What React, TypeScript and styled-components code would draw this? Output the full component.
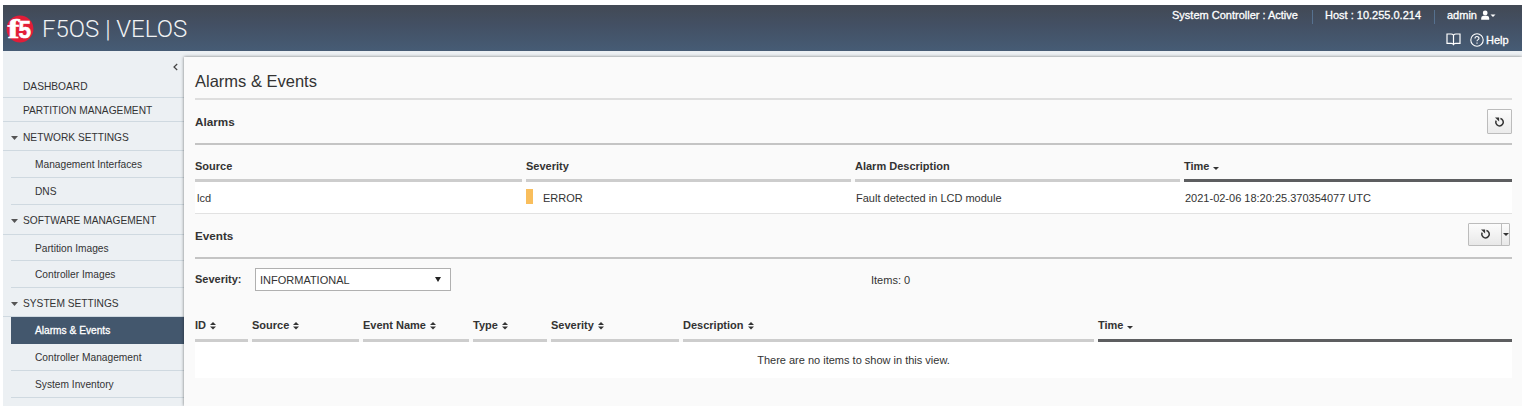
import React from "react";
import styled, { createGlobalStyle, css } from "styled-components";

const GlobalStyle = createGlobalStyle`
  * { box-sizing: border-box; }
  body {
    margin: 0;
    background: #fff;
    color: #333;
    font: 11px/14px "Liberation Sans", Arial, sans-serif;
  }
`;

const Page = styled.div`
  height: 406px;
  padding: 5px 0 0 3px;
  display: flex;
  flex-direction: column;
  overflow: hidden;
`;

const Header = styled.header`
  height: 46px;
  flex: none;
  display: flex;
  justify-content: space-between;
  background: linear-gradient(#424954, #435064 45%, #465c75);
  color: #fff;
`;

const Brand = styled.div`
  display: flex;
  align-items: center;
  padding: 2px 0 0 3px;
  gap: 8px;
`;

const BrandName = styled.span`
  font: 300 24px/28px Roboto, sans-serif;
  color: #f0f2f4;
  white-space: nowrap;
`;

const HeaderInfo = styled.div`
  display: flex;
  flex-direction: column;
  width: 350px;
  -webkit-text-stroke: 0.3px #fff;
`;

const StatusLine = styled.div`
  display: flex;
  height: 20px;
  padding-top: 5px;
`;

const StatusItem = styled.div<{ $width: number; $indent?: number }>`
  width: ${(p) => p.$width}px;
  height: 14px;
  padding-left: ${(p) => p.$indent ?? 0}px;
  line-height: 11px;
  white-space: nowrap;
  border-right: 1px solid #56718f;
`;

const UserMenu = styled.div`
  display: flex;
  align-items: flex-start;
  padding-left: 12px;
  line-height: 11px;
  gap: 4px;
`;

const HelpLine = styled.div`
  display: flex;
  align-items: center;
  padding: 6px 0 0 274px;
  height: 23px;
`;

const HelpLabel = styled.span`
  padding: 1px 0 0 2px;
`;

const BookIcon = styled.svg`
  margin-right: 9px;
`;

const Body = styled.div`
  flex: 1;
  min-height: 0;
  display: flex;
  background: #ecf0f3;
`;

const Sidebar = styled.nav`
  width: 181px;
  flex: none;
  font-size: 10.2px;
`;

const Collapse = styled.div`
  height: 24px;
  display: flex;
  justify-content: flex-end;
  padding: 12px 6px 0 0;
`;

const NavItem = styled.div<{ $height: number; $drop?: number }>`
  height: ${(p) => p.$height}px;
  border-bottom: 1px solid #cfd9e0;
  display: flex;
  align-items: center;
  padding: ${(p) => p.$drop ?? 2}px 0 0 8px;
  white-space: nowrap;
`;

const Caret = styled.span`
  width: 12px;
  display: flex;
`;

const SubItem = styled.div<{ $height: number; $active?: boolean }>`
  height: ${(p) => p.$height}px;
  margin-left: 8px;
  padding: 2px 0 0 24px;
  border-bottom: 1px solid #cfd9e0;
  display: flex;
  align-items: center;
  white-space: nowrap;
  ${(p) =>
    p.$active &&
    css`
      background: #43576d;
      border-bottom-color: #43576d;
      color: #fff;
      -webkit-text-stroke: 0.3px #fff;
    `}
`;

const Panel = styled.main`
  flex: 1;
  min-width: 0;
  margin-top: 6px;
  padding: 0 10px 0 11px;
  background: #fafafa;
  box-shadow: 0 0 3px rgba(0, 0, 0, 0.5);
`;

const Title = styled.h1`
  height: 43px;
  margin: 0;
  padding-top: 14px;
  border-bottom: 2px solid #dedede;
  font-size: 16.5px;
  line-height: 20px;
  font-weight: 400;
`;

const SectionBar = styled.div<{ $height: number }>`
  height: ${(p) => p.$height}px;
  display: flex;
  justify-content: space-between;
  align-items: center;
  border-bottom: 2px solid #c4c4c4;
`;

const SectionTitle = styled.h2`
  margin: 0;
  font-size: 11.7px;
  line-height: 14px;
`;

const RefreshButton = styled.button`
  width: 25px;
  height: 25px;
  padding: 0;
  display: flex;
  align-items: center;
  justify-content: center;
  border: 1px solid #bcbcbc;
  border-radius: 1px;
  background: linear-gradient(#fcfcfc, #ebebeb);
`;

const SplitButton = styled.div`
  width: 42px;
  height: 23px;
  margin: 0 2px 3px 0;
  display: flex;
  border: 1px solid #bcbcbc;
  border-radius: 1px;
  background: linear-gradient(#fcfcfc, #e8e8e8);
`;

const SplitPart = styled.button<{ $width: number; $divided?: boolean }>`
  width: ${(p) => p.$width}px;
  padding: 0;
  border: 0;
  border-left: ${(p) => (p.$divided ? "1px solid #bcbcbc" : "0")};
  background: none;
  display: flex;
  align-items: center;
  justify-content: center;
`;

const HeadRow = styled.div<{ $columns: string; $top: number }>`
  display: grid;
  grid-template-columns: ${(p) => p.$columns};
  column-gap: 4px;
  padding-top: ${(p) => p.$top}px;
`;

const HeadCell = styled.div<{ $sorted?: boolean; $height: number }>`
  height: ${(p) => p.$height}px;
  display: flex;
  align-items: flex-start;
  gap: 4px;
  font-weight: 700;
  white-space: nowrap;
  border-bottom: 3px solid ${(p) => (p.$sorted ? "#5d5e60" : "#cdcdcd")};
`;

const SortIcon = styled.svg`
  flex: none;
  margin-top: 4px;
`;

const AlarmRow = styled.div`
  height: 32px;
  display: grid;
  grid-template-columns: 327px 325px 325px 328px;
  column-gap: 4px;
  align-items: center;
  background: #fff;
  border-bottom: 1px solid #e2e2e2;
`;

const Cell = styled.div<{ $indent: number }>`
  padding-left: ${(p) => p.$indent}px;
  display: flex;
  align-items: center;
`;

const SeverityMark = styled.span`
  width: 7px;
  height: 15px;
  margin: -2px 10px 0 0;
  background: #f9be5c;
`;

const FilterRow = styled.div`
  display: flex;
  height: 32px;
  padding-top: 9px;
`;

const FilterLabel = styled.label`
  width: 60px;
  padding-top: 4px;
  font-weight: 700;
`;

const Select = styled.div`
  width: 196px;
  height: 23px;
  padding: 0 9px 0 4px;
  display: flex;
  align-items: center;
  justify-content: space-between;
  background: #fff;
  border: 1px solid #b0b0b0;
`;

const ItemCount = styled.span`
  padding: 5px 0 0 420px;
`;

const EmptyState = styled.div`
  height: 36px;
  display: flex;
  align-items: center;
  justify-content: center;
  background: #fff;
`;

const RefreshIcon = () => (
  <svg width="11" height="10" viewBox="0 0 11 10" fill="none" stroke="#333" strokeWidth="1.5">
    <path d="M6.4 1.6a3.7 3.7 0 1 1-4.2 2" />
    <path d="M1 .6h4.1v4z" fill="#333" stroke="none" />
  </svg>
);

const DownArrow = ({ width, height, color = "#333" }: { width: number; height: number; color?: string }) => (
  <svg width={width} height={height} viewBox="0 0 6 4" preserveAspectRatio="none">
    <path d="M0 0h6L3 4z" fill={color} />
  </svg>
);

const SortMark = ({ sorted }: { sorted?: boolean }) => (
  <SortIcon width="6" height="8" viewBox="0 0 6 8" fill="#333">
    {sorted ? (
      <path d="M0 4h6L3 7z" />
    ) : (
      <>
        <path d="M0 3h6L3 0z" />
        <path d="M0 4.4h6L3 7.4z" />
      </>
    )}
  </SortIcon>
);

const Logo = () => (
  <svg width="28" height="28" viewBox="0 0 28 28">
    <circle cx="14" cy="14" r="13.4" fill="#e21d38" />
    <text x="1.5" y="23" fill="#fff" stroke="#fff" strokeWidth=".5" fontFamily="Liberation Serif, serif" fontWeight="700" fontSize="27" textLength="12" lengthAdjust="spacingAndGlyphs">f</text>
    <text x="12.5" y="22.5" fill="#fff" stroke="#fff" strokeWidth=".6" fontFamily="Liberation Sans, sans-serif" fontWeight="700" fontSize="24" textLength="12.5" lengthAdjust="spacingAndGlyphs">5</text>
  </svg>
);

const navigation = [
  { label: "NETWORK SETTINGS", height: 29, items: [["Management Interfaces", 27], ["DNS", 27]] },
  { label: "SOFTWARE MANAGEMENT", height: 30, items: [["Partition Images", 26], ["Controller Images", 27]] },
  {
    label: "SYSTEM SETTINGS",
    height: 29,
    items: [["Alarms & Events", 27], ["Controller Management", 27], ["System Inventory", 27]],
  },
] as { label: string; height: number; items: [string, number][] }[];

const eventColumns = ["ID", "Source", "Event Name", "Type", "Severity", "Description", "Time"];
const alarmColumns = ["Source", "Severity", "Alarm Description", "Time"];

export default function App() {
  return (
    <Page>
      <GlobalStyle />
      <Header>
        <Brand>
          <Logo />
          <BrandName>F5OS | VELOS</BrandName>
        </Brand>
        <HeaderInfo>
          <StatusLine>
            <StatusItem $width={141}>System Controller : Active</StatusItem>
            <StatusItem $width={122} $indent={12}>
              Host : 10.255.0.214
            </StatusItem>
            <UserMenu>
              admin
              <svg width="16" height="10" viewBox="0 0 16 10" fill="#fff">
                <circle cx="4.2" cy="3" r="2.4" />
                <path d="M.2 9.8V8Q.2 6 2.4 5.8h3.6Q8.200 6 8.200 8v1.800zM9.500 4.500h5l-2.500 2.600z" />
              </svg>
            </UserMenu>
          </StatusLine>
          <HelpLine>
            <BookIcon width="15" height="13" viewBox="0 0 15 13" fill="none" stroke="#fff" strokeWidth="1.2">
              <path d="M7.5 2.2C6.8 1.3 6 1 5 1H1v9.3h4.4c1 0 1.7.4 2.1 1.2.4-.8 1.1-1.2 2.1-1.2H14V1h-4c-1 0-1.8.3-2.5 1.2zM7.5 2v9.5" />
            </BookIcon>
            <svg width="14" height="14" viewBox="0 0 14 14" fill="none" stroke="#fff" strokeWidth="1.1">
              <circle cx="7" cy="7" r="6.2" />
              <path d="M5 5.5c0-2.6 4-2.5 4-.2C9 6.7 7 6.6 7 8.3M7 9.5v1.3" />
            </svg>
            <HelpLabel>Help</HelpLabel>
          </HelpLine>
        </HeaderInfo>
      </Header>
      <Body>
        <Sidebar>
          <Collapse>
            <svg width="5" height="8" viewBox="0 0 5 8" fill="none" stroke="#444" strokeWidth="1.2">
              <path d="M4.2 1L1 4l3.2 3" />
            </svg>
          </Collapse>
          <NavItem $height={23}>
            <Caret />
            DASHBOARD
          </NavItem>
          <NavItem $height={24}>
            <Caret />
            PARTITION MANAGEMENT
          </NavItem>
          {navigation.map((group) => (
            <React.Fragment key={group.label}>
              <NavItem $height={group.height} $drop={group.height === 30 ? 2 : 4}>
                <Caret>
                  <DownArrow width={7} height={4} color="#555" />
                </Caret>
                {group.label}
              </NavItem>
              {group.items.map(([label, height]) => (
                <SubItem key={label} $height={height} $active={label === "Alarms & Events"}>
                  {label}
                </SubItem>
              ))}
            </React.Fragment>
          ))}
        </Sidebar>
        <Panel>
          <Title>Alarms &amp; Events</Title>
          <SectionBar $height={45}>
            <SectionTitle>Alarms</SectionTitle>
            <RefreshButton aria-label="Refresh alarms">
              <RefreshIcon />
            </RefreshButton>
          </SectionBar>
          <HeadRow $columns="327px 325px 325px 328px" $top={14}>
            {alarmColumns.map((name) => (
              <HeadCell key={name} $height={23} $sorted={name === "Time"}>
                {name}
                {name === "Time" && <SortMark sorted />}
              </HeadCell>
            ))}
          </HeadRow>
          <AlarmRow>
            <Cell $indent={2}>lcd</Cell>
            <Cell $indent={0}>
              <SeverityMark />
              ERROR
            </Cell>
            <Cell $indent={1}>Fault detected in LCD module</Cell>
            <Cell $indent={1}>2021-02-06 18:20:25.370354077 UTC</Cell>
          </AlarmRow>
          <SectionBar $height={45}>
            <SectionTitle>Events</SectionTitle>
            <SplitButton>
              <SplitPart $width={32} aria-label="Refresh events">
                <RefreshIcon />
              </SplitPart>
              <SplitPart $width={8} $divided aria-label="Refresh options">
                <DownArrow width={6} height={3} />
              </SplitPart>
            </SplitButton>
          </SectionBar>
          <FilterRow>
            <FilterLabel>Severity:</FilterLabel>
            <Select>
              INFORMATIONAL
              <DownArrow width={6} height={5} color="#222" />
            </Select>
            <ItemCount>Items: 0</ItemCount>
          </FilterRow>
          <HeadRow $columns="53px 107px 106px 74px 128px 411px 414px" $top={27}>
            {eventColumns.map((name) => (
              <HeadCell key={name} $height={24} $sorted={name === "Time"}>
                {name}
                <SortMark sorted={name === "Time"} />
              </HeadCell>
            ))}
          </HeadRow>
          <EmptyState>There are no items to show in this view.</EmptyState>
        </Panel>
      </Body>
    </Page>
  );
}
